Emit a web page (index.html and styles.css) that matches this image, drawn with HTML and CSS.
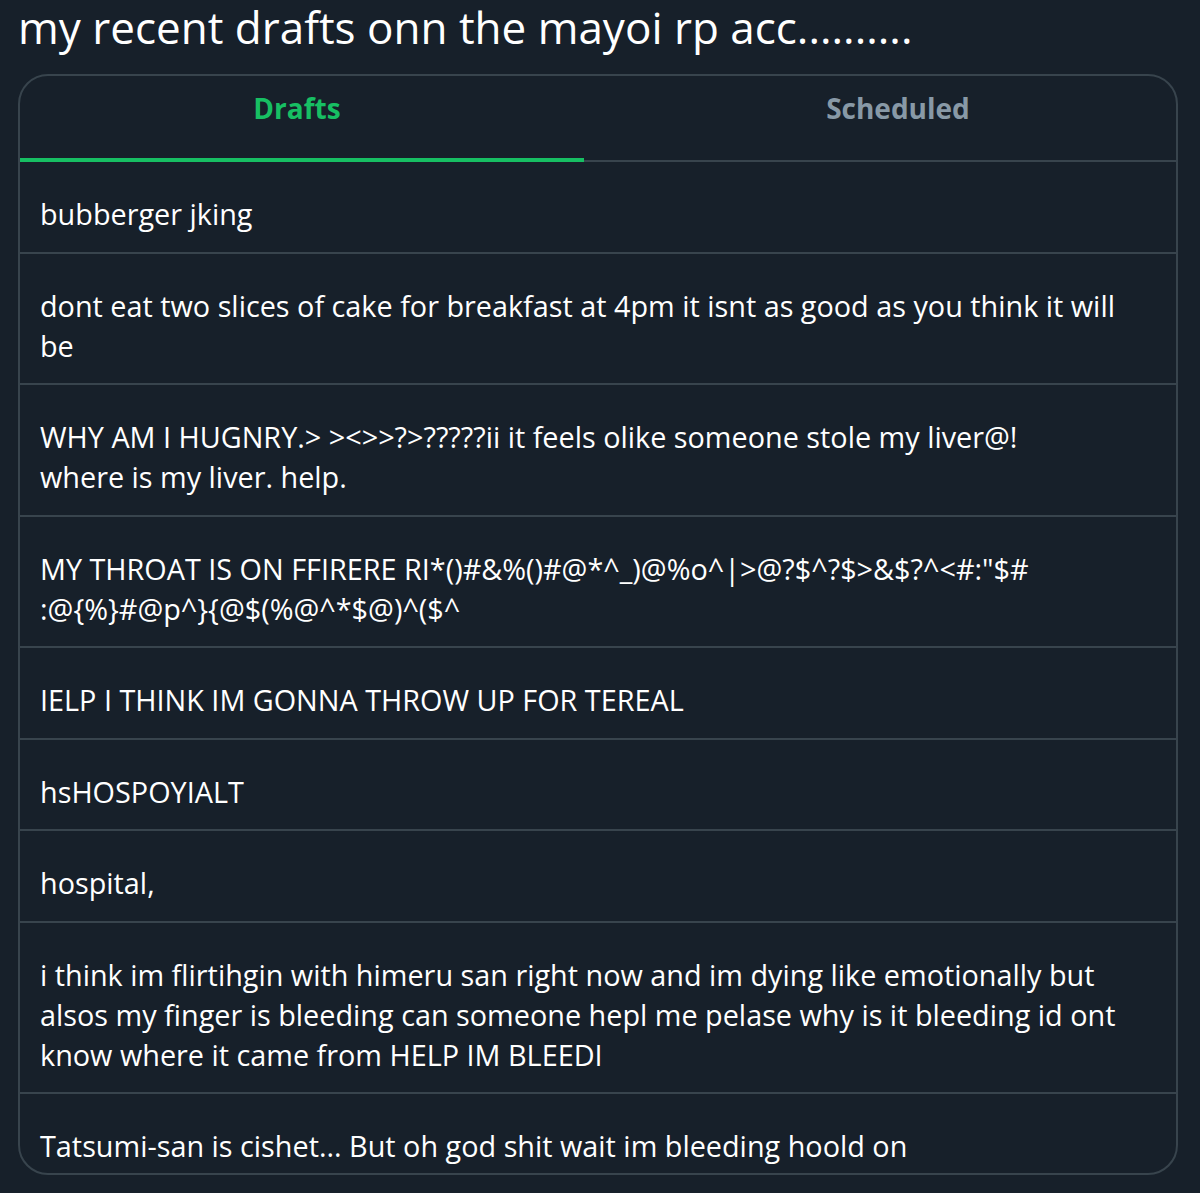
FILE: index.html
```html
<!DOCTYPE html>
<html lang="en">

<head>
  <meta charset="UTF-8">
  <title>my recent drafts</title>
  <link rel="stylesheet" href="styles.css">
</head>

<body>
  <h1 class="title">my recent drafts onn the mayoi rp acc..........</h1>

  <div class="panel">
    <div class="tabs">
      <div class="tab active">Drafts</div>
      <div class="tab later">Scheduled</div>
    </div>

    <ul class="drafts">
      <li>bubberger jking</li>
      <li>dont eat two slices of cake for breakfast at 4pm it isnt as good as you think it will<br>be</li>
      <li>WHY AM I HUGNRY.&gt; &gt;&lt;&gt;&gt;?&gt;?????ii it feels olike someone stole my liver@!<br>where is my liver. help.</li>
      <li>MY THROAT IS ON FFIRERE RI*()#&amp;%()#@*^_)@%o^|&gt;@?$^?$&gt;&amp;$?^&lt;#:"$#<br>:@{%}#@p^}{@$(%@^*$@)^($^</li>
      <li>IELP I THINK IM GONNA THROW UP FOR TEREAL</li>
      <li>hsHOSPOYIALT</li>
      <li>hospital,</li>
      <li>i think im flirtihgin with himeru san right now and im dying like emotionally but<br>alsos my finger is bleeding can someone hepl me pelase why is it bleeding id ont<br>know where it came from HELP IM BLEEDI</li>
      <li class="last">Tatsumi-san is cishet... But oh god shit wait im bleeding hoold on</li>
    </ul>
  </div>
</body>

</html>
```

FILE: styles.css
```css
:root {
  --bg: #17202a;
  --line: #38444d;
  --green: #17bf63;
  --muted: #8899a6;
}

body {
  margin: 0;
  padding: 0 22px 0 18px;
  background: var(--bg);
  color: #ffffff;
  font-family: 'Open Sans', 'Noto Sans', sans-serif;
  height: 1193px;
  overflow: hidden;
}

.title {
  margin: 0;
  padding-top: 1px;
  font-size: 44px;
  font-weight: 400;
  line-height: 52px;
}

.panel {
  margin-top: 21px;
  border: 2px solid var(--line);
  border-radius: 30px;
  overflow: hidden;
}

.tabs {
  display: flex;
  border-bottom: 2px solid var(--line);
}

.tab {
  text-align: center;
  font-size: 28px;
  font-weight: 700;
  color: var(--muted);
  padding: 13px 0 31px;
  border-bottom: 4px solid transparent;
  margin-bottom: -2px;
}

.tab.active {
  width: 554px;
  padding-right: 10px;
  color: var(--green);
  border-bottom-color: var(--green);
}

.tab.later {
  flex: 1;
  padding-left: 36px;
}

.drafts {
  list-style: none;
  margin: 0;
  padding: 0;
}

.drafts li {
  padding: 32px 20px 17.5px;
  font-size: 28.8px;
  line-height: 40px;
  border-bottom: 2px solid var(--line);
}

.drafts li.last {
  border-bottom: none;
  padding-bottom: 7px;
}
```
